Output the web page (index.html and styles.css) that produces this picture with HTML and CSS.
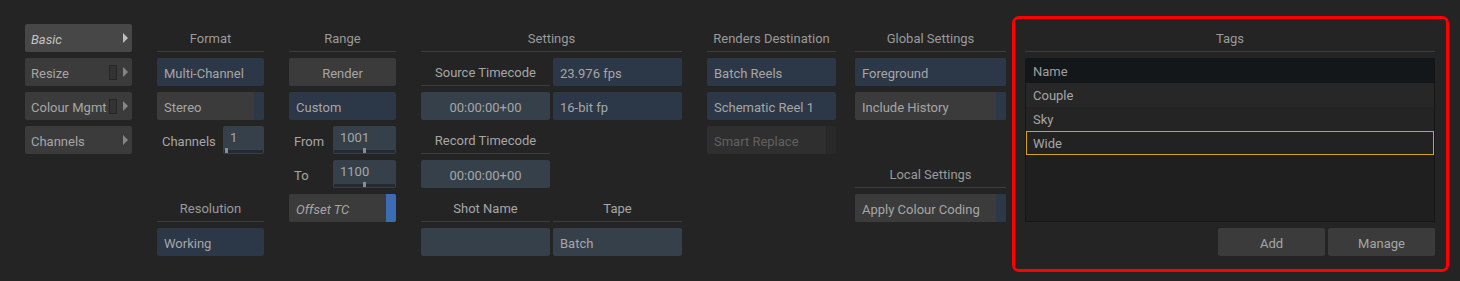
FILE: index.html
```html
<!DOCTYPE html>
<html lang="en">
<head>
    <meta charset="UTF-8">
    <title>Export Settings</title>
    <link rel="stylesheet" href="styles.css">
</head>
<body>
    <div class="panel">
        <!-- Section tabs -->
        <div class="col col-tabs">
            <div class="tab active">Basic <span class="arrow"></span></div>
            <div class="tab">Resize <span class="toggle"></span><span class="arrow"></span></div>
            <div class="tab">Colour Mgmt <span class="toggle"></span><span class="arrow"></span></div>
            <div class="tab">Channels <span class="arrow"></span></div>
        </div>

        <div class="col col-format">
            <div class="head">Format</div>
            <div class="field blue">Multi-Channel</div>
            <div class="field gray strip">Stereo</div>
            <div class="label-row">
                <span class="label">Channels</span>
                <div class="num" style="--knob: 2px">1</div>
            </div>
            <div class="spacer"></div>
            <div class="head">Resolution</div>
            <div class="field blue">Working</div>
        </div>

        <div class="col col-range">
            <div class="head">Range</div>
            <div class="field gray center">Render</div>
            <div class="field blue">Custom</div>
            <div class="label-row">
                <span class="label">From</span>
                <div class="num" style="--knob: 30px">1001</div>
            </div>
            <div class="label-row">
                <span class="label">To</span>
                <div class="num" style="--knob: 30px">1100</div>
            </div>
            <div class="field gray strip strip-on italic">Offset TC</div>
        </div>

        <div class="col col-settings">
            <div class="head">Settings</div>
            <div class="pair">
                <div class="sub-head">Source Timecode</div>
                <div class="field blue">23.976 fps</div>
            </div>
            <div class="pair">
                <div class="field tc">00:00:00+00</div>
                <div class="field blue">16-bit fp</div>
            </div>
            <div class="pair">
                <div class="sub-head">Record Timecode</div>
                <div></div>
            </div>
            <div class="pair">
                <div class="field tc">00:00:00+00</div>
                <div></div>
            </div>
            <div class="pair">
                <div class="sub-head">Shot Name</div>
                <div class="sub-head">Tape</div>
            </div>
            <div class="pair">
                <div class="field slate"></div>
                <div class="field slate">Batch</div>
            </div>
        </div>

        <div class="col col-dest">
            <div class="head">Renders Destination</div>
            <div class="field blue">Batch Reels</div>
            <div class="field blue">Schematic Reel 1</div>
            <div class="field off strip">Smart Replace</div>
        </div>

        <div class="col col-global">
            <div class="head">Global Settings</div>
            <div class="field blue">Foreground</div>
            <div class="field gray strip">Include History</div>
            <div class="spacer"></div>
            <div class="head">Local Settings</div>
            <div class="field gray strip">Apply Colour Coding</div>
        </div>

        <div class="highlight">
            <div class="col col-tags">
                <div class="head">Tags</div>
                <div class="list">
                    <div class="list-head">Name</div>
                    <div class="item">Couple</div>
                    <div class="item">Sky</div>
                    <div class="item selected">Wide</div>
                </div>
                <div class="actions">
                    <div class="field gray center">Add</div>
                    <div class="field gray center">Manage</div>
                </div>
            </div>
        </div>
    </div>
</body>
</html>
```

FILE: styles.css
```css
:root {
    --bg: #242424;
    --gray: #3b3b3b;
    --blue: #2c3747;
    --slate: #36404b;
    --line: #3d3d3d;
    --text: #a6a6a6;
    --head: #9a9a9a;
}

* {
    box-sizing: border-box;
    margin: 0;
    padding: 0;
}

body {
    background-color: var(--bg);
    color: var(--text);
    font-family: Roboto, "Noto Sans", sans-serif;
    font-size: 13px;
}

.panel {
    display: flex;
    align-items: flex-start;
    padding: 16px 0 0 25px;
    height: 281px;
}

.col {
    display: flex;
    flex-direction: column;
    gap: 6px;
    margin-top: 8px;
}

.col-tabs { width: 107px; }
.col-format { width: 107px; margin-left: 25px; }
.col-range { width: 107px; margin-left: 25px; }
.col-settings { width: 261px; margin-left: 25px; }
.col-dest { width: 129px; margin-left: 25px; }
.col-global { width: 151px; margin-left: 19px; }
.col-tags { width: 410px; margin-top: 0; }

.head {
    height: 28px;
    line-height: 30px;
    text-align: center;
    color: var(--head);
    border-bottom: 1px solid var(--line);
}

.spacer {
    height: 28px;
}

.field {
    height: 28px;
    line-height: 31px;
    padding: 0 7px;
    border-radius: 2px;
    white-space: nowrap;
    overflow: hidden;
    position: relative;
}

.field.blue { background-color: var(--blue); }
.field.gray { background-color: var(--gray); }
.field.slate { background-color: var(--slate); }
.field.tc { background-color: var(--slate); text-align: center; }
.field.center { text-align: center; }
.field.italic { font-style: italic; }

.field.off {
    background-color: #2f2f2f;
    color: #616161;
}

/* toggle strip on the right edge */
.field.strip::after {
    content: "";
    position: absolute;
    top: 0;
    right: 0;
    bottom: 0;
    width: 10px;
    background-color: var(--blue);
}

.field.off.strip::after { background-color: #292929; width: 9px; border-left: 1px solid #262626; }
.field.strip-on::after { background-color: #3c6db3; }

/* tabs */
.tab {
    height: 28px;
    line-height: 31px;
    padding: 0 6px;
    background-color: var(--gray);
    border-radius: 2px;
    position: relative;
    white-space: nowrap;
}

.tab.active {
    background-color: #474747;
    font-style: italic;
    color: #c4c4c4;
}

.tab .arrow {
    position: absolute;
    right: 4px;
    top: 9px;
    width: 0;
    height: 0;
    border-top: 5px solid transparent;
    border-bottom: 5px solid transparent;
    border-left: 5px solid #858585;
}

.tab.active .arrow { border-left-color: #bdbdbd; }

.tab .toggle {
    position: absolute;
    right: 15px;
    top: 7px;
    width: 8px;
    height: 15px;
    background-color: #333;
    border: 1px solid #262626;
}

/* label + number input */
.label-row {
    display: flex;
    align-items: center;
    justify-content: space-between;
    height: 28px;
    padding-left: 5px;
    padding-top: 2px;
}

.num {
    width: 63px;
    height: 28px;
    margin-top: -2px;
    line-height: 24px;
    padding: 0 7px;
    background-color: var(--slate);
    border-radius: 2px;
    position: relative;
}

.col-format .num { width: 41px; }

.num::before {
    content: "";
    position: absolute;
    left: 1px;
    right: 1px;
    bottom: 1px;
    height: 3px;
    background-color: #252a30;
}

.num::after {
    content: "";
    position: absolute;
    left: var(--knob);
    bottom: 1px;
    width: 3px;
    height: 5px;
    background-color: #8c8c8c;
}

/* settings two-column rows */
.pair {
    display: grid;
    grid-template-columns: 129px 129px;
    column-gap: 3px;
}

.sub-head {
    height: 28px;
    line-height: 30px;
    text-align: center;
    color: var(--text);
    border-bottom: 1px solid var(--line);
}

/* tags */
.highlight {
    margin-left: 6px;
    width: 437px;
    height: 256px;
    border: 3px solid #ff0000;
    border-radius: 7px;
    padding: 5px 0 0 10px;
}

.list {
    height: 164px;
    background-color: #1f1f1f;
    border: 1px solid #161616;
    display: flex;
    flex-direction: column;
}

.list-head,
.item {
    height: 24px;
    line-height: 25px;
    padding: 0 7px;
}

.list-head {
    background-color: #141719;
    color: #9e9e9e;
}

.item:nth-child(2) { background-color: #272727; }
.item:nth-child(3) { background-color: #242424; }

.item.selected {
    background-color: #222;
    border: 1px solid #d5a11f;
    padding: 0 6px;
    line-height: 23px;
}

.actions {
    display: flex;
    justify-content: flex-end;
    gap: 3px;
}

.actions .field {
    width: 107px;
}
```
